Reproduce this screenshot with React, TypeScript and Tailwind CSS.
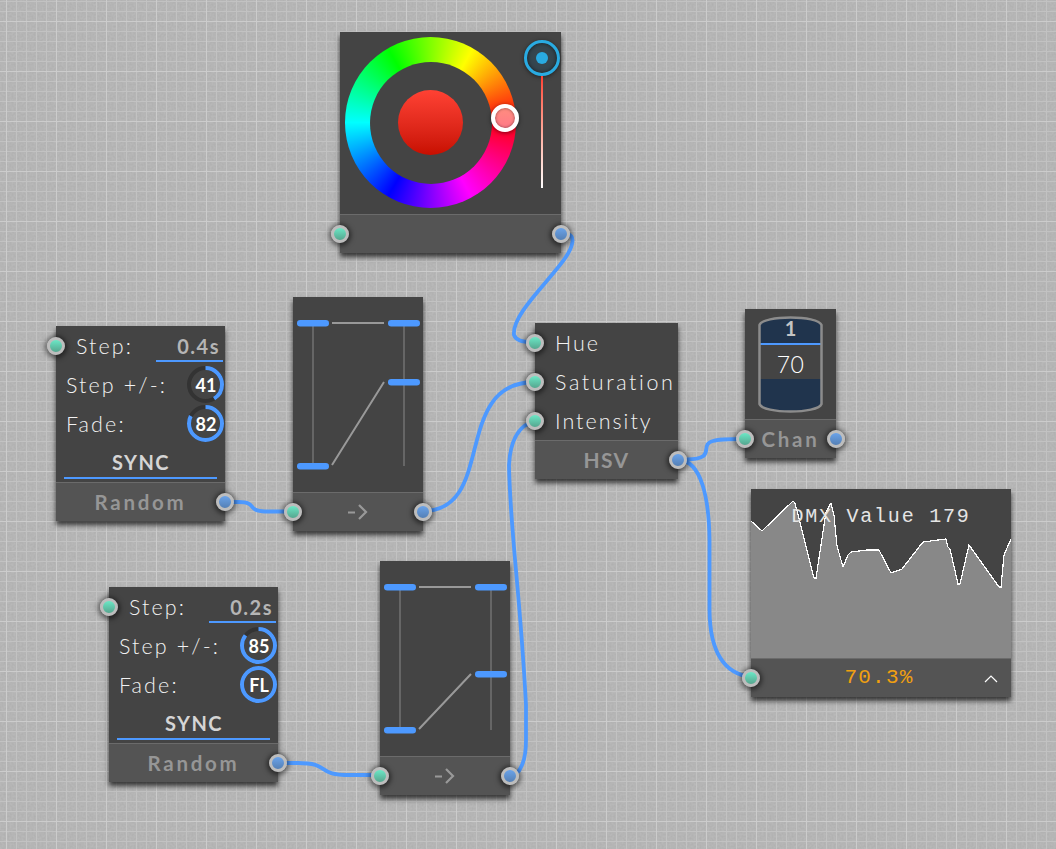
import React from "react";

type P = { x: number; y: number };

function Port({ kind }: { kind: "in" | "out" }) {
  return (
    <span
      className={
        "z-20 size-[18px] shrink-0 rounded-full border-[3px] border-[#bdbdbd] bg-linear-to-b shadow-[0_1px_5px_2px_rgba(0,0,0,0.5)] " +
        (kind === "in" ? "-ml-[9px] from-[#6be8c6] to-[#56a68f]" : "-mr-[9px] from-[#6aa3ea] to-[#5580b5]")
      }
    />
  );
}

type NodeProps = P & {
  w: number;
  h: number;
  input?: boolean;
  output?: boolean;
  children?: React.ReactNode;
  footer?: React.ReactNode;
};

function Node({ x, y, w, h, input, output, children, footer }: NodeProps) {
  return (
    <section className="absolute flex flex-col bg-[#444444] shadow-[0_4px_5px_0px_rgba(0,0,0,0.7)]" style={{ left: x, top: y, width: w, height: h }}>
      <div className="min-h-0 flex-1">{children}</div>
      <footer className="flex h-[39px] shrink-0 items-center border-t border-[#6b6b6b] bg-[#545454] text-[20.5px] font-bold tracking-[2.7px] text-[#969696]">
        {input ? <Port kind="in" /> : <span className="w-[9px]" />}
        <div className="flex flex-1 justify-center whitespace-nowrap">{footer}</div>
        {output ? <Port kind="out" /> : <span className="w-[9px]" />}
      </footer>
    </section>
  );
}

function Knob({ label, value }: { label: string; value: number }) {
  const c = 2 * Math.PI * 16.5;
  return (
    <div className="grid size-[37px] place-items-center tracking-normal">
      <svg viewBox="0 0 37 37" className="col-start-1 row-start-1 size-full -rotate-90">
        <circle cx="18.5" cy="18.5" r="16.5" fill="none" stroke="#333333" strokeWidth="4" />
        <circle cx="18.5" cy="18.5" r="16.5" fill="none" stroke="#4d99ff" strokeWidth="4" strokeDasharray={`${c * value} ${c}`} />
      </svg>
      <span className="col-start-1 row-start-1 pt-px pl-px text-[18px] leading-none font-bold text-white">{label}</span>
    </div>
  );
}

function RandomNode({ x, y, step, jitter, fade }: P & { step: string; jitter: [string, number]; fade: [string, number] }) {
  return (
    <Node x={x} y={y} w={169} h={195} output footer={<span>Random</span>}>
      <div className="flex h-full flex-col text-[21.5px] font-light tracking-[2.1px] text-[#f2f2f2]">
        <div className="flex h-[39px] items-center pr-0.5">
          <Port kind="in" />
          <span className="flex-1 pt-0.5 pl-[11px]">Step:</span>
          <span className="h-9 w-[67px] self-start border-b-2 border-[#4d99ff] pr-[3px] text-right text-[20px] leading-[40px] font-bold tracking-[1.5px] text-[#b5b5b5]">{step}</span>
        </div>
        <div className="flex h-[39px] items-center justify-between pr-px pl-2.5">
          <span className="pt-0.5">Step +/-:</span>
          <Knob label={jitter[0]} value={jitter[1]} />
        </div>
        <div className="flex h-[39px] items-center justify-between pr-px pl-2.5">
          <span className="pt-0.5">Fade:</span>
          <Knob label={fade[0]} value={fade[1]} />
        </div>
        <button className="mx-2 h-9 border-b-2 border-[#4d99ff] pt-[3px] pl-px text-[20px] font-bold tracking-[1.4px] text-[#d5d5d5]">SYNC</button>
      </div>
    </Node>
  );
}

function CurveNode({ x, y, level }: P & { level: number }) {
  return (
    <Node
      x={x}
      y={y}
      w={130}
      h={234}
      input
      output
      footer={
        <svg viewBox="0 0 20 16" className="h-4 w-5" fill="none" stroke="#999999" strokeWidth="2.2">
          <path d="M0 8.500h7M11 1l7 7-7 7" />
        </svg>
      }
    >
      <svg viewBox="0 0 130 195" className="block h-[195px] w-[130px]">
        <path d="M20 26v143M111 26v143" stroke="#666" strokeWidth="2" />
        <path d={`M39 26h52M39 168L91 ${level}`} stroke="#999999" strokeWidth="2" fill="none" />
        <g fill="#4d99ff">
          <rect x="4" y="23" width="32" height="6.5" rx="3.2" />
          <rect x="95" y="23" width="32" height="6.5" rx="3.2" />
          <rect x="4" y="166" width="32" height="6.5" rx="3.2" />
          <rect x="95" y={level - 3} width="32" height="6.5" rx="3.2" />
        </g>
      </svg>
    </Node>
  );
}

function ColorNode() {
  return (
    <Node x={340} y={32} w={221} h={221} input output>
      <div className="flex pt-[5px] pl-[5px]">
        <div className="relative flex size-[171px] items-center justify-center rounded-full bg-[conic-gradient(from_90deg,#ff0010,#ff00ff_17%,#0000ff_33.3%,#00ffff_50%,#00ff00_66.7%,#ffff00_83.3%,#ff0010)]">
          <div className="flex size-[122px] items-center justify-center rounded-full bg-[#444444]">
            <div className="size-[65px] rounded-full bg-linear-to-b from-[#ff4133] to-[#c80e00]" />
          </div>
          <span className="absolute top-[67px] left-[146px] size-7 rounded-full border-4 border-white bg-linear-to-b from-[#ff8d7f] to-[#ff7987] shadow-[0_1px_4px_rgba(0,0,0,0.5),inset_0_0_3px_rgba(0,0,0,0.5)]" />
        </div>
        <div className="flex flex-col items-center pt-[3px] pl-2">
          <span className="flex size-9 items-center justify-center rounded-full border-[3px] border-[#29abe2] bg-[#35464f] shadow-[0_1px_4px_rgba(0,0,0,0.5),inset_0_0_4px_rgba(0,0,0,0.6)]">
            <span className="size-3 rounded-full bg-[#29abe2]" />
          </span>
          <div className="h-28 w-0.5 bg-linear-to-b from-[#ff3b30] to-white" />
        </div>
      </div>
    </Node>
  );
}

function HsvNode() {
  return (
    <Node x={535} y={323} w={143} h={156} output footer={<span className="text-[21px] tracking-[1.4px]">HSV</span>}>
      <div className="flex flex-col text-[21.5px] font-light text-[#f2f2f2]">
        <div className="flex h-[39px] items-center gap-[11px]">
          <Port kind="in" />
          <span className="pt-0.5 tracking-[1.9px]">Hue</span>
        </div>
        <div className="flex h-[39px] items-center gap-[11px]">
          <Port kind="in" />
          <span className="pt-0.5 tracking-[2.6px]">Saturation</span>
        </div>
        <div className="flex h-[39px] items-center gap-[11px]">
          <Port kind="in" />
          <span className="pt-0.5 tracking-[2px]">Intensity</span>
        </div>
      </div>
    </Node>
  );
}

function ChanNode() {
  return (
    <Node x={745} y={309} w={91} h={149} input output footer={<span>Chan</span>}>
      <div className="grid">
        <svg viewBox="0 0 91 110" className="col-start-1 row-start-1 h-[110px] w-[91px]">
          <path d="M14.5 16C18 6 73 6 76.500 16V95C73 105 18 105 14.500 95Z" fill="#20344d" />
          <path d="M15 35h61v35H15z" fill="#444444" />
          <path d="M15 35h61" stroke="#4d99ff" strokeWidth="2" />
          <path d="M14.500 16C18 6 73 6 76.500 16V95C73 105 18 105 14.500 95Z" fill="none" stroke="#8c8c8c" strokeWidth="2.500" />
        </svg>
        <div className="col-start-1 row-start-1 flex flex-col items-center pt-2">
          <span className="h-[26px] text-[20px] leading-[23px] font-bold text-[#c4c4c4]">1</span>
          <span className="h-9 text-[23px] leading-[42px] font-light tracking-[0.5px] text-white">70</span>
        </div>
      </div>
    </Node>
  );
}

const history =
  "0,32 11,42 42,12 44,14 63,89 65,89 75,23 80,14 83,26 86,57 92,78 97,66 100,63 116,61 128,61 140,84 151,80 172,53 195,50 197,58 199,60 207,95 209,95 218,56 248,98 250,98 253,66 260,50";

function MonitorNode() {
  return (
    <Node
      x={751}
      y={489}
      w={260}
      h={208}
      input
      footer={
        <div className="grid flex-1 grid-cols-[1fr_auto_1fr] items-center pr-1 font-['Liberation_Mono',monospace] text-[21px] font-normal tracking-[1.2px] text-[#f0a010]">
          <span />
          <span>70.3%</span>
          <svg viewBox="0 0 14 8" className="mt-px h-2 w-3.5 justify-self-end" fill="none" stroke="white" strokeWidth="1.2">
            <path d="M1 7L7 1l6 6" />
          </svg>
        </div>
      }
    >
      <div className="grid">
        <svg viewBox="0 0 260 169" className="col-start-1 row-start-1 h-[169px] w-[260px]" shapeRendering="crispEdges">
          <polygon points={history + " 260,169 0,169"} fill="#888888" />
          <polyline points={history} fill="none" stroke="white" strokeWidth="1.200" />
        </svg>
        <p className="col-start-1 row-start-1 pt-4 text-center font-['Liberation_Mono',monospace] text-[20px] leading-6 tracking-[1.75px] text-[#e5e5e5]">DMX Value 179</p>
      </div>
    </Node>
  );
}

const wires = [
  "M568 234Q574 236 572 244C568 266 511 310 514 335Q517 343 535 342",
  "M225 502H239C258 502 246 511 265 511.500H293",
  "M423 511C497 511 451 382 535 382",
  "M278 763H298C332 763 314 775 350 775H380",
  "M510 775Q518 775 521 767Q526 758 526 740V705C520 590 510 530 509 465Q511 427 535 421",
  "M678 459.500H687C718 459 698 445 713 441Q718 439 745 439",
  "M678 460C702 460 709 500 709.500 540V610Q710 672 751 677",
];

export default function App() {
  return (
    <main className="relative h-[849px] w-[1056px] overflow-hidden bg-[#b8b8b8] font-['Lato',sans-serif]">
      <svg className="absolute inset-0 size-full">
        <defs>
          <pattern id="grid" x="6" y="21" width="50" height="50" patternUnits="userSpaceOnUse">
            <path d="M10.500 0v50M20.500 0v50M30.500 0v50M40.500 0v50M0 10.500h50M0 20.500h50M0 30.500h50M0 40.500h50" stroke="#c2c2c2" strokeWidth="1" />
            <path d="M.5 0v50M0 .5h50" stroke="#cccccc" strokeWidth="1" />
          </pattern>
          <filter id="grain" x="0" y="0" width="100%" height="100%">
            <feTurbulence type="fractalNoise" baseFrequency="0.5" numOctaves="2" seed="4" />
            <feColorMatrix values="0 0 0 0 0  0 0 0 0 0  0 0 0 0 0  0.450 0 0 0 -0.130" />
          </filter>
        </defs>
        <rect width="100%" height="100%" filter="url(#grain)" opacity="0.17" />
        <rect width="100%" height="100%" fill="url(#grid)" />
      </svg>
      <ColorNode />
      <RandomNode x={56} y={326} step="0.4s" jitter={["41", 0.41]} fade={["82", 0.82]} />
      <RandomNode x={109} y={587} step="0.2s" jitter={["85", 0.85]} fade={["FL", 1]} />
      <CurveNode x={293} y={297} level={85} />
      <CurveNode x={380} y={561} level={113} />
      <HsvNode />
      <ChanNode />
      <MonitorNode />
      <svg viewBox="0 0 1056 849" className="absolute inset-0 z-10 size-full" fill="none" stroke="#4d99ff" strokeWidth="3.800">
        {wires.map((d) => (
          <path key={d} d={d} />
        ))}
      </svg>
    </main>
  );
}
